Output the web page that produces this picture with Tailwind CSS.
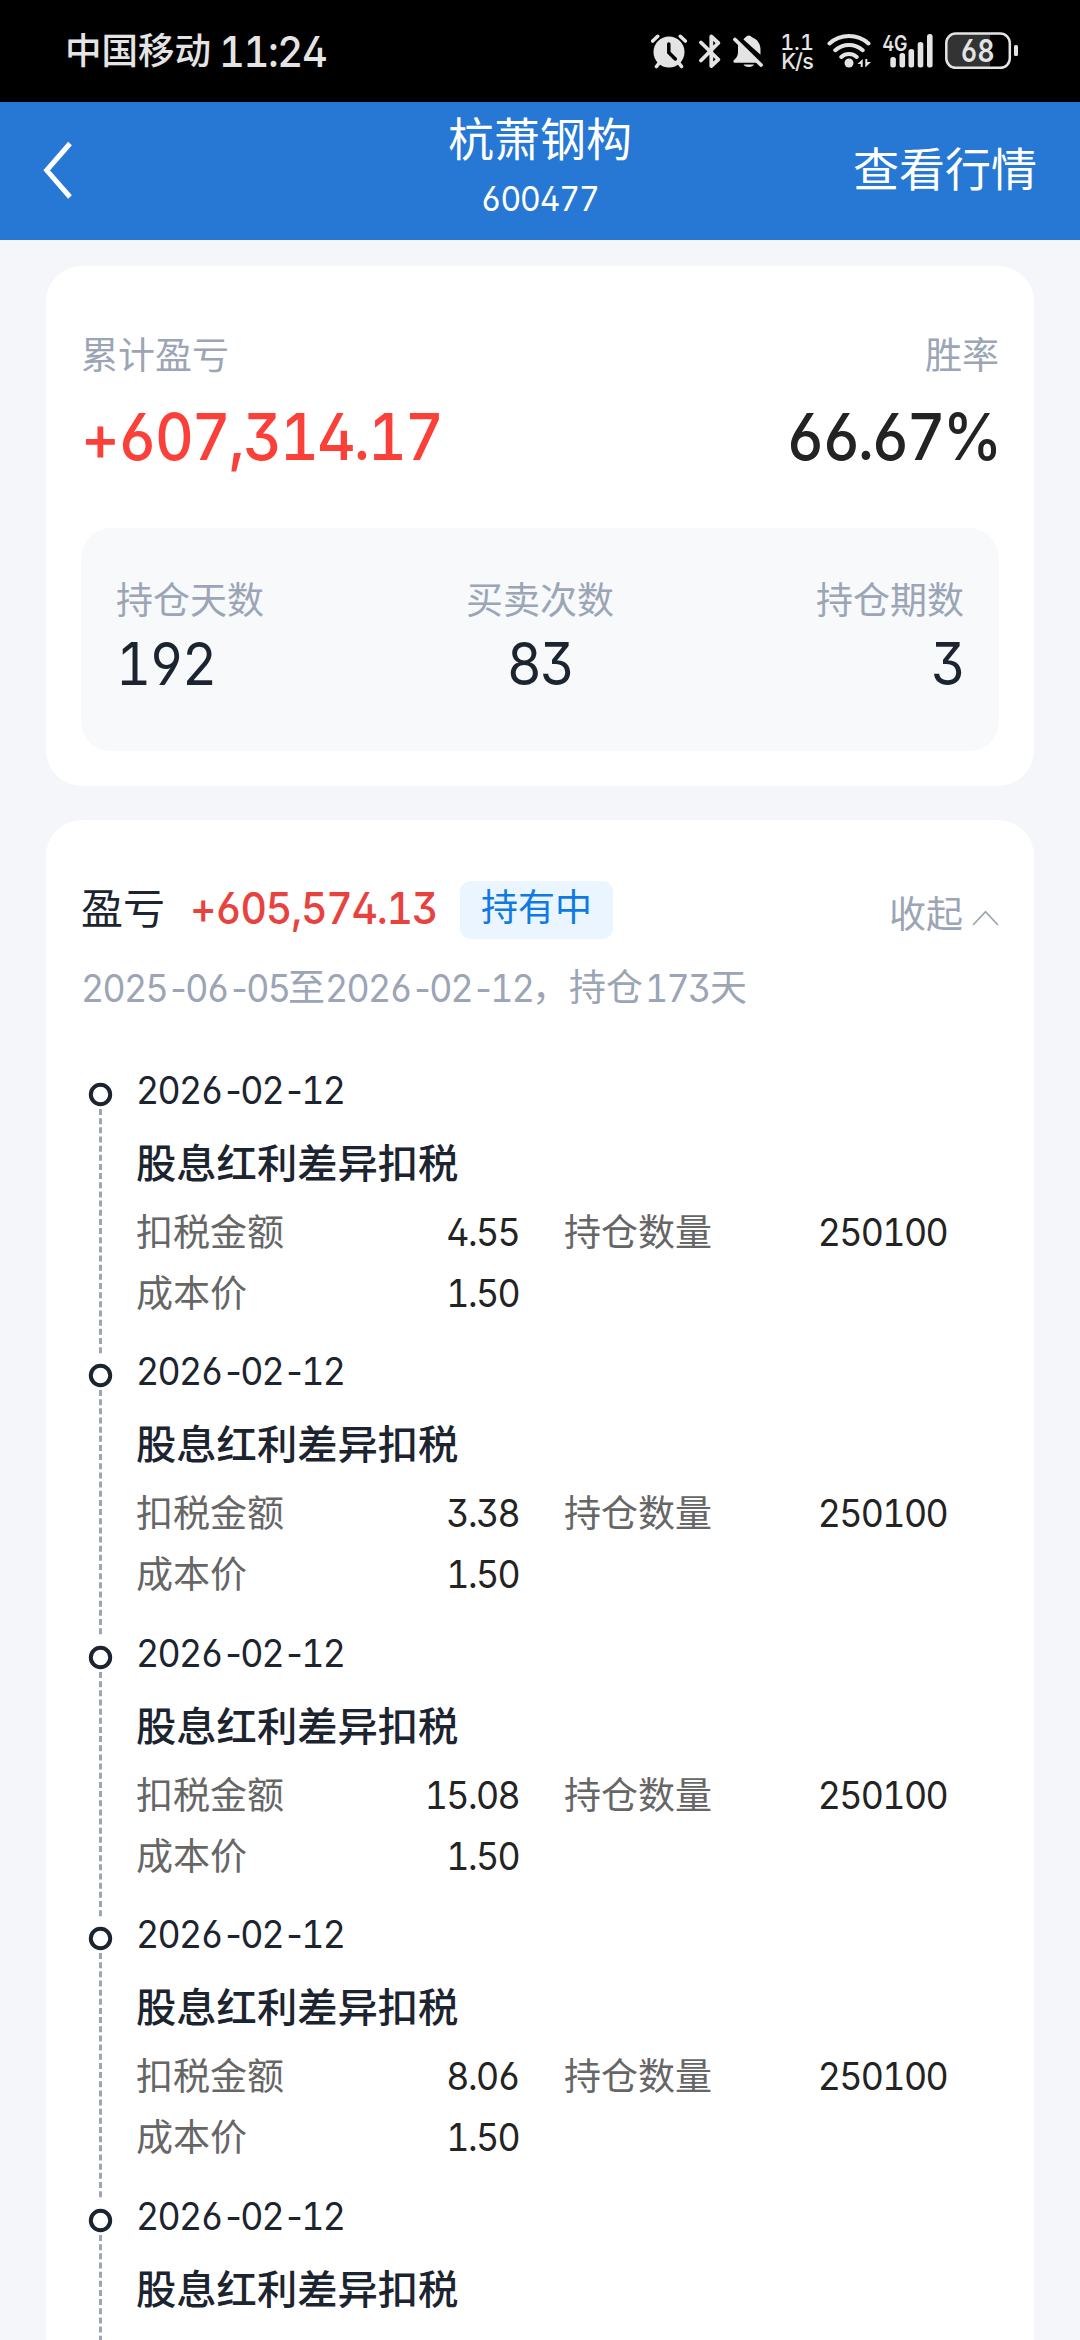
<!DOCTYPE html>
<html lang="zh-CN">
<head>
<meta charset="utf-8">
<title>杭萧钢构</title>
<script src="https://cdn.jsdelivr.net/npm/@tailwindcss/browser@4"></script>
</head>
<body class="w-[1080px] h-[2340px] overflow-hidden flex flex-col bg-[#f4f6fa] font-['Inter','Noto_Sans_CJK_SC',sans-serif] text-[37px] text-[#1c2430] [font-feature-settings:'ss01','tnum']">

<!-- status bar -->
<div class="h-[102px] shrink-0 bg-black text-[#e4e4e4] flex items-center pl-[65px]">
  <span class="text-[36.500px] leading-[102px] font-medium w-[154px] whitespace-nowrap">中国移动</span>
  <span class="w-[432px]"><span class="inline-block origin-left scale-x-[.93] tracking-[-0.035em] text-[43px] leading-[102px] font-medium whitespace-nowrap">11:24</span></span>
  <svg class="w-[36px] h-[36px]" viewBox="651 33 36 36" fill="none" stroke="#e4e4e4" stroke-linecap="round">
    <circle cx="669" cy="52" r="15.5" fill="#e4e4e4" stroke="none"/>
    <path d="M652.7 41l5-4.7M685.300 41l-5-4.700M659.500 62.500l-3 4M678.500 62.500l3 4" stroke-width="3.600"/>
    <path d="M668.800 44v8.500l6.500 6.500" stroke="#000" stroke-width="3.500"/>
  </svg>
  <svg class="w-[22px] h-[36px] ml-3" viewBox="699 33 22 36" fill="none" stroke="#e4e4e4" stroke-width="3.800" stroke-linecap="round" stroke-linejoin="round">
    <path d="M701 42.500L718.300 59.500L711.300 66V36.500L718.300 43L701 60.500"/>
  </svg>
  <svg class="w-[31px] h-[36px] ml-3" viewBox="733 33 31 36" fill="#e4e4e4">
    <path d="M743.500 39.500a6 6 0 0 1 2-2.300a4 3.800 0 0 1 6.500 0c5.500 2 8.500 7 8.500 12v5.500z"/>
    <path d="M738 44.500L757 62.800H735.500c-2.500 0-2.800-1.800-1-3.400c2.400-2.200 3.500-4 3.500-8zM743.500 64.500h10.500a5.500 3.500 0 0 1-10.500 0z"/>
    <path d="M735 39.500L761 65" stroke="#e4e4e4" stroke-width="3.800" stroke-linecap="round"/>
  </svg>
  <div class="w-[34px] ml-4 mt-[2px] flex flex-col items-center font-medium text-[21.500px] leading-[19px]">
    <span>1.1</span><span class="whitespace-nowrap tracking-[-0.04em]">K/s</span>
  </div>
  <svg class="w-[45px] h-[36px] ml-[13px]" viewBox="827 33 45 36" fill="none" stroke="#e4e4e4" stroke-width="4" stroke-linecap="round">
    <path d="M829.500 43.500a29 29 0 0 1 39 0M835.300 50.200a20.500 20.500 0 0 1 27.400 0M841.300 57a11.500 11.500 0 0 1 15.400 0"/>
    <circle cx="849" cy="63" r="4.500" fill="#e4e4e4" stroke="none"/>
    <path d="M857.500 64l5.200-5v8h-2v-3zM871 62l-5.700 5.500v-8.500h2v3z" fill="#e4e4e4" stroke="none"/>
  </svg>
  <svg class="w-[51px] h-[38px] ml-[10px] overflow-visible" viewBox="882 32 51 38" fill="#e4e4e4">
    <text x="882.500" y="50.500" font-size="22" font-weight="600" textLength="25" lengthAdjust="spacingAndGlyphs">4G</text>
    <rect x="890.300" y="57" width="5.600" height="10.500" rx="2.500"/><rect x="899.500" y="53" width="5.600" height="14.500" rx="2.500"/><rect x="908.500" y="49" width="5.600" height="18.500" rx="2.500"/><rect x="917.700" y="42" width="5.600" height="25.500" rx="2.500"/><rect x="927" y="34" width="5.600" height="33.500" rx="2.500"/>
  </svg>
  <svg class="w-[74px] h-[38px] ml-[12px]" viewBox="945 32 74 38">
    <path d="M956 34h34v33h-34a9 9 0 0 1-9-9v-15a9 9 0 0 1 9-9z" fill="#333"/>
    <rect x="946.300" y="33.500" width="63.500" height="34.300" rx="9.500" fill="none" stroke="#e4e4e4" stroke-width="2.500"/>
    <rect x="1014" y="45" width="4" height="11" rx="1.500" fill="#e4e4e4"/>
    <text x="960.500" y="61.800" font-size="31" font-weight="600" textLength="34" lengthAdjust="spacingAndGlyphs" fill="#e4e4e4">68</text>
  </svg>
</div>

<!-- title bar -->
<div class="h-[138px] shrink-0 bg-[#2678d4] text-white grid grid-cols-3 items-start px-[43px]">
  <svg class="w-[30px] h-[60px] mt-[38px]" viewBox="43 140 30 60" fill="none" stroke="#fff" stroke-width="5"><path d="M70 143.500L46.700 170.300L70 197"/></svg>
  <div class="flex flex-col items-center mt-[4px]">
    <span class="text-[46px] leading-[66px] whitespace-nowrap">杭萧钢构</span>
    <span class="text-[34px] leading-[54px] scale-x-[.94] tracking-[-0.034em]">600477</span>
  </div>
  <span class="text-[46px] leading-[66px] mt-[34px] text-right whitespace-nowrap">查看行情</span>
</div>

<main class="px-[46px] pt-[26px] flex-1 min-h-0 flex flex-col gap-[34px]">
  <!-- totals -->
  <section class="h-[520px] shrink-0 rounded-[36px] bg-white px-[35px] pt-[62px]">
    <div class="flex justify-between text-[#9ba5b5] leading-[56px]"><span>累计盈亏</span><span>胜率</span></div>
    <div class="flex justify-between text-[64.500px] leading-[106px] font-medium">
      <span class="text-[#fb4039] origin-left scale-x-[.93] tracking-[-0.032em]">+607,314.17</span><span class="text-[#232323] origin-right scale-x-[.93] tracking-[-0.05em]">66.67%</span>
    </div>
    <div class="mt-[38px] h-[223px] rounded-[30px] bg-[#f7f9fb] px-[35px] pt-[45px] flex justify-between">
      <div class="flex flex-col items-start"><span class="text-[#9ba5b5] leading-[56px]">持仓天数</span><span class="text-[59px] leading-[69px] origin-left scale-x-[.92] tracking-[-0.041em]">192</span></div>
      <div class="flex flex-col items-center"><span class="text-[#9ba5b5] leading-[56px]">买卖次数</span><span class="text-[59px] leading-[69px] scale-x-[.92] tracking-[-0.041em]">83</span></div>
      <div class="flex flex-col items-end"><span class="text-[#9ba5b5] leading-[56px]">持仓期数</span><span class="text-[59px] leading-[69px] origin-right scale-x-[.92] tracking-[-0.041em]">3</span></div>
    </div>
  </section>

  <!-- current holding -->
  <section class="flex-1 min-h-0 overflow-hidden rounded-t-[36px] bg-white px-[35px] pt-[60px]">
    <div class="flex items-start h-[60px]">
      <span class="text-[42px] leading-[58px] w-[109px]">盈亏</span>
      <span class="w-[270px]"><span class="inline-block origin-left scale-x-[.93] tracking-[-0.03em] text-[44px] leading-[57px] font-medium text-[#e8423f] whitespace-nowrap">+605,574.13</span></span>
      <span class="w-[153px] h-[58px] mt-[1px] rounded-[11px] bg-[#ebf5ff] text-[#0e7ae2] text-center leading-[54px]">持有中</span>
      <span class="ml-auto text-[#9ba5b5] leading-[70px]">收起</span>
      <svg class="w-[27px] h-[18px] ml-[9px] mt-[29px]" viewBox="972 909 27 18" fill="none" stroke="#9ba5b5" stroke-width="1.800"><path d="M973 925l12.500-13.300L998 925"/></svg>
    </div>
    <div class="mt-[20px] flex leading-[56px] text-[#9ba5b5] whitespace-nowrap">
      <span class="w-[207px] text-[38px]"><span class="inline-block origin-left scale-x-[.94] tracking-[-0.047em]">2025<span class="tracking-[-0.139em]">-</span>06<span class="tracking-[-0.139em]">-</span>05</span></span>
      <span class="w-[37px]">至</span>
      <span class="w-[207px] text-[38px]"><span class="inline-block origin-left scale-x-[.94] tracking-[-0.047em]">2026<span class="tracking-[-0.139em]">-</span>02<span class="tracking-[-0.139em]">-</span>12</span></span>
      <span class="w-[113px]">，持仓</span>
      <span class="w-[65px] text-[38px]"><span class="inline-block origin-left scale-x-[.94] tracking-[-0.047em]">173</span></span>
      <span>天</span>
    </div>
    <div id="timeline" class="mt-[46px] pl-[8px]"></div>
  </section>
</main>

<script>
const entries = [['2026-02-12','4.55'],['2026-02-12','3.38'],['2026-02-12','15.08'],['2026-02-12','8.06'],['2026-02-12',null]];
const num = v => `<span class="text-right text-[38px] text-[#232323] origin-right scale-x-[.94] tracking-[-0.045em]">${v}</span>`;
document.getElementById('timeline').innerHTML = entries.map(([date, tax]) => `
  <div class="flex h-[281.400px]">
    <svg class="w-[24px] h-[281.400px] mr-[23px] shrink-0 overflow-visible" viewBox="0 0 24 281.400" fill="none">
      <circle cx="11.500" cy="32.500" r="9.700" stroke="#1c2430" stroke-width="4"/>
      <path d="M11.500 47V291.500" stroke="#9ba5b5" stroke-width="3" stroke-dasharray="6 3.160"/>
    </svg>
    <div class="flex flex-col">
      <span class="text-[38px] leading-[56px] origin-left scale-x-[.94] tracking-[-0.047em] self-start whitespace-nowrap">${date.replaceAll('-', '<span class="tracking-[-0.139em]">-</span>')}</span>
      <span class="text-[40.300px] leading-[60px] mt-[16px] font-medium whitespace-nowrap">股息红利差异扣税</span>
      ${tax ? `<div class="grid grid-cols-[190px_193px_190px_238px] leading-[61px] mt-[8px] text-[#666] whitespace-nowrap">
        <span>扣税金额</span>${num(tax)}
        <span class="pl-[45px]">持仓数量</span>${num('250100')}
        <span>成本价</span>${num('1.50')}
      </div>` : ''}
    </div>
  </div>`).join('');
</script>
</body>
</html>
